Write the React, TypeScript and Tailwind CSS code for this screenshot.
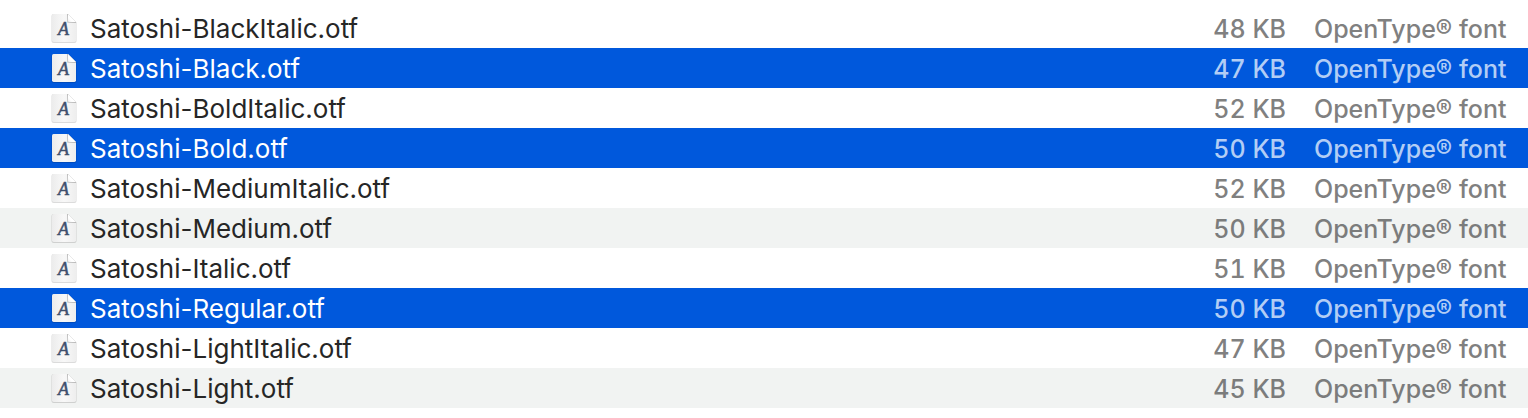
import React from "react";

type FontFile = {
  name: string;
  size: string;
  tone: "plain" | "striped" | "selected";
};

const files: FontFile[] = [
  { name: "Satoshi-BlackItalic.otf", size: "48 KB", tone: "plain" },
  { name: "Satoshi-Black.otf", size: "47 KB", tone: "selected" },
  { name: "Satoshi-BoldItalic.otf", size: "52 KB", tone: "plain" },
  { name: "Satoshi-Bold.otf", size: "50 KB", tone: "selected" },
  { name: "Satoshi-MediumItalic.otf", size: "52 KB", tone: "plain" },
  { name: "Satoshi-Medium.otf", size: "50 KB", tone: "striped" },
  { name: "Satoshi-Italic.otf", size: "51 KB", tone: "plain" },
  { name: "Satoshi-Regular.otf", size: "50 KB", tone: "selected" },
  { name: "Satoshi-LightItalic.otf", size: "47 KB", tone: "plain" },
  { name: "Satoshi-Light.otf", size: "45 KB", tone: "striped" },
];

const rowTone = {
  plain: "bg-white text-[#262626]",
  striped: "bg-[#f1f3f2] text-[#262626]",
  selected: "bg-[#0058dc] text-white",
};

const detailTone = {
  plain: "text-[#808080]",
  striped: "text-[#7b7c7c]",
  selected: "text-[#b2cdf5]",
};

function FontFileIcon() {
  return (
    <svg width="28" height="32" viewBox="0 0 28 32" className="shrink-0" aria-hidden="true">
      <defs>
        <linearGradient id="sheet" x1="0" y1="0" x2="1" y2="0">
          <stop offset="0" stopColor="#ececec" />
          <stop offset="0.5" stopColor="#f8f8f8" />
          <stop offset="1" stopColor="#eeeeee" />
        </linearGradient>
        <linearGradient id="fold" x1="0" y1="1" x2="1" y2="0">
          <stop offset="0" stopColor="#ececec" />
          <stop offset="0.3" stopColor="#ffffff" />
        </linearGradient>
        <linearGradient id="foldShade" x1="0" y1="1" x2="1" y2="0">
          <stop offset="0" stopColor="#000" stopOpacity="0.14" />
          <stop offset="1" stopColor="#000" stopOpacity="0.3" />
        </linearGradient>
      </defs>
      <path d="M3.5 2H18L26.5 10.500V29q0 2-2 2H3.5q-2 0-2-2V4q0-2 2-2z" fill="#000" fillOpacity="0.14" />
      <path d="M3.500 2H18L26 10V28.300q0 1.700-1.700 1.700H3.700Q2 30 2 28.300V3.500Q2 2 3.500 2z" fill="url(#sheet)" />
      <path d="M17 2V9.500q0 1.500 1.500 1.500H26V10L18 2z" fill="url(#foldShade)" />
      <path d="M18 2V8.500q0 1.500 1.500 1.500H26z" fill="url(#fold)" />
      <text
        x="13.5"
        y="23"
        textAnchor="middle"
        fill="#3f506d"
        stroke="#3f506d"
        strokeWidth="0.5"
        fontSize="18"
        fontStyle="italic"
        fontFamily="'Liberation Serif', serif"
      >
        A
      </text>
    </svg>
  );
}

export default function App() {
  return (
    <main className="bg-white py-2 font-['Inter',sans-serif] text-[25px] font-medium leading-[38px]">
      <table className="w-full border-collapse" aria-label="Font files">
        <tbody>
          {files.map((file) => (
            <tr key={file.name} className={rowTone[file.tone]} aria-selected={file.tone === "selected"}>
              <td className="h-10 p-0 pl-[50px]">
                <div className="flex h-10 items-center gap-3">
                  <FontFileIcon />
                  <span className="pt-0.5 text-[26px] font-normal">{file.name}</span>
                </div>
              </td>
              <td className={`h-10 w-[100px] p-0 pt-0.5 text-right whitespace-nowrap tabular-nums ${detailTone[file.tone]}`}>
                {file.size}
              </td>
              <td className={`h-10 w-[242px] p-0 pt-0.5 pl-7 whitespace-nowrap ${detailTone[file.tone]}`}>
                OpenType® font
              </td>
            </tr>
          ))}
        </tbody>
      </table>
    </main>
  );
}
